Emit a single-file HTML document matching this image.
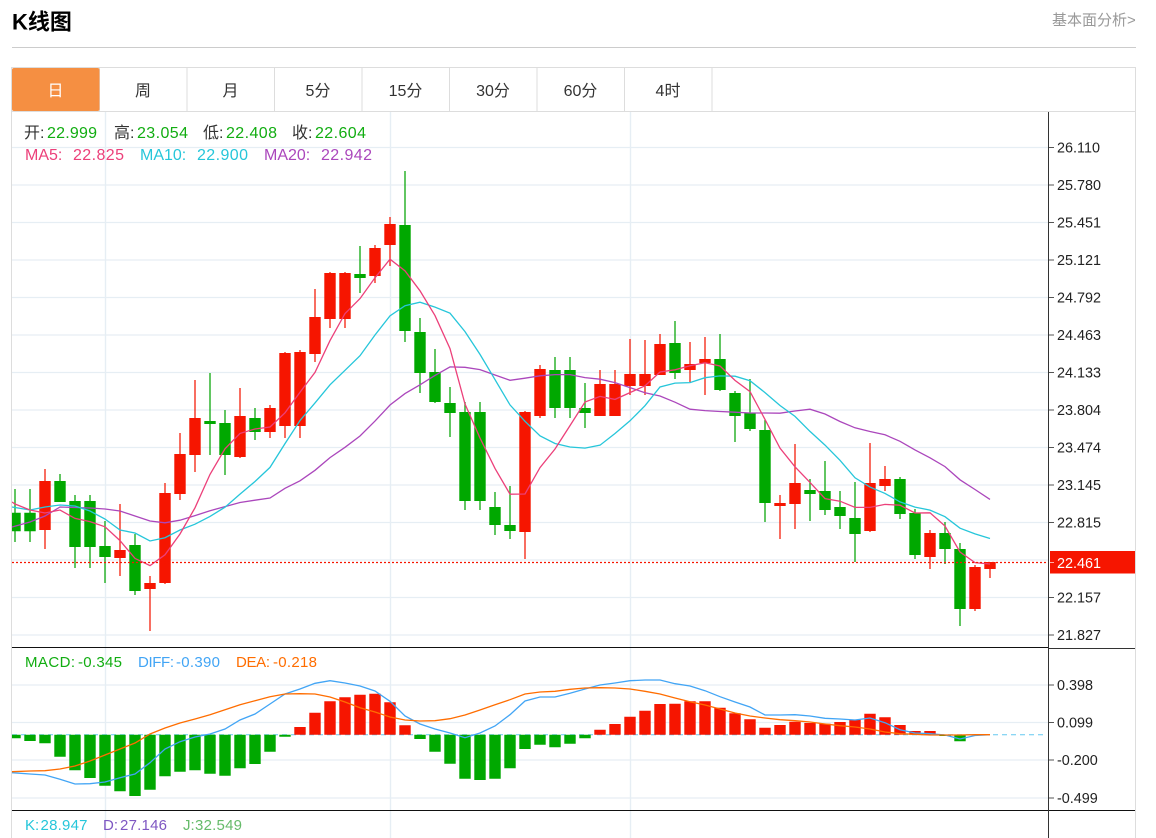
<!DOCTYPE html>
<html lang="zh"><head><meta charset="utf-8"><title>K线图</title>
<style>
html,body{margin:0;padding:0;background:#fff;width:1156px;height:838px;overflow:hidden}
svg{display:block;position:absolute;left:0;top:0}
text{font-family:"Liberation Sans","Noto Sans CJK SC",sans-serif}
</style></head><body>
<svg width="1156" height="838" viewBox="0 0 1156 838" xmlns="http://www.w3.org/2000/svg">
<defs><clipPath id="c"><rect x="12" y="112" width="1036" height="726"/></clipPath></defs>
<text x="12" y="29.5" font-size="22" font-weight="700" fill="#000">K线图</text>
<text x="1052" y="25" font-size="15" fill="#999">基本面分析&gt;</text>
<path d="M12 47.5H1136" stroke="#ccc" fill="none"/>
<!-- frame -->
<path d="M11.5 838V67.5H1135.5V838" stroke="#ddd" fill="none"/>
<path d="M12 111.5H1135.5M99.5 68V111M187 68V111M274.5 68V111M362 68V111M449.5 68V111M537 68V111M624.5 68V111M712 68V111" stroke="#ddd" fill="none"/>
<rect x="12" y="68" width="87.5" height="43" rx="2" fill="#f58f42"/>
<g font-size="16" text-anchor="middle" fill="#333">
<text x="55.5" y="96" fill="#fff">日</text><text x="143" y="96">周</text><text x="230.5" y="96">月</text><text x="318" y="96">5分</text><text x="405.5" y="96">15分</text><text x="493" y="96">30分</text><text x="580.5" y="96">60分</text><text x="668" y="96">4时</text>
</g>
<!-- grid -->
<path d="M105.5 112V838M390.5 112V838M630.5 112V838" stroke="#e6eef4" stroke-width="1.4" fill="none"/>
<path d="M12 147.5H1048M12 185H1048M12 222.5H1048M12 260H1048M12 297.5H1048M12 335H1048M12 372.5H1048M12 410H1048M12 447.5H1048M12 485H1048M12 522.5H1048M12 560H1048M12 597.5H1048M12 635H1048M12 685H1048M12 722.5H1048M12 760H1048M12 798H1048" stroke="#e6eef4" stroke-width="1.3" fill="none"/>
<g clip-path="url(#c)" fill="none">
<!-- green wicks -->
<path stroke="#1fae1f" stroke-width="1.4" d="M15 489V542M30 489V542M60 474V502M75 495V568M90 495V568M105 521V583M135 534V595M210 373V455M225 410V475M255 408V440M360 246V293M405 171V342M420 318V393M435 349V403M450 387V437M465 402V510M480 402V510M495 492V535M510 486V539M555 357V418M570 357V418M585 383V428M675 321V379M720 334V391M735 391V442M750 379V431M765 420V522M810 479V521M825 461V515M840 491V529M855 482V562M900 477V519M915 509V559M945 522V564M960 543V626"/>
<!-- red wicks -->
<path stroke="#f5301e" stroke-width="1.4" d="M45 469V549M120 504V576M150 576V631M165 483V584M180 433V500M195 380V472M240 388V458M270 405V438M285 352V438M300 350V438M315 289V362M330 272V328M345 272V328M375 245V283M390 217V266M525 411V559M540 365V418M600 370V416M615 370V416M630 339V395M645 340V395M660 334V375M690 342V382M705 337V395M780 495V539M795 444V529M870 443V532M885 466V491M930 530V569M975 565V611M990 562V578"/>
<!-- green bodies -->
<path stroke="#00a800" stroke-width="11.4" d="M15 512.7V531.3M30 512.7V531.3M60 481V502M75 501V547M90 501V547M105 546V557M135 545V591M210 421V424M225 423V455M255 418V432M360 274V278M405 225V331M420 332V373M435 372V402M450 403V413M465 412V501M480 412V501M495 507V525M510 525V531M555 370V408M570 370V408M585 408V413M675 343V373M720 359V390M735 393V416M750 413V429M765 430V503M810 490V494M825 491V510M840 507V516M855 518V534M900 479V514M915 513V555M945 533V549M960 549V609"/>
<!-- red bodies -->
<path stroke="#f61500" stroke-width="11.4" d="M45 481V530M120 550V558M150 583V589M165 493V583M180 454V494M195 418V455M240 416V457M270 408V432M285 353V426M300 352V426M315 317V354M330 273V319M345 273V319M375 248V276M390 224V245M525 412V532M540 369V416M600 384V416M615 384V416M630 374V386M645 374V386M660 344V375M690 364V370M705 359V363M780 503V506M795 483V504M870 483V531M885 479V486M930 533V557M975 567V609M990 562V569"/>
<!-- MA20 -->
<polyline stroke="#ab47bc" stroke-width="1.3" points="12,527 30,522 45,516 60,507 75,507.5 90,508 105,509 120,511 135,516 150,521 165,522.8 180,520.2 195,515.6 210,510.7 225,506.6 240,502.5 255,500.2 270,498 285,488.3 300,480.8 315,470.3 330,457.6 345,447.3 360,436 375,421.1 390,405 405,393.6 420,384.8 435,375.4 450,366.9 465,367.3 480,369.6 495,375 510,380.3 525,378.2 540,375.8 555,374.6 570,374.6 585,377.6 600,379.2 615,382.6 630,387.6 645,392.7 660,396 675,402.2 690,409.2 705,410.6 720,411.5 735,412.2 750,413 765,413 780,413.2 795,411 810,409.2 825,414 840,421.5 855,427.8 870,431.5 885,434.8 900,441.3 915,449.9 930,457.8 945,466.6 960,479.8 975,489.5 990,499.4"/>
<!-- MA10 -->
<polyline stroke="#26c6da" stroke-width="1.3" points="12,507 30,510 45,507 60,505 75,506 90,511 105,519 120,530 135,533 150,541 165,537.7 180,530 195,524.2 210,516.4 225,507.2 240,494.1 255,481.5 270,467.4 285,443.6 300,420.5 315,402.9 330,384.8 345,370.3 360,355.7 375,335 390,315.8 405,305.7 420,302.2 435,307.1 450,313.2 465,331.6 480,354.4 495,379.6 510,404.9 525,421.3 540,435.8 555,443.5 570,447 585,448.1 600,445.2 615,433.5 630,420.8 645,405.7 660,387 675,383.1 690,382.6 705,377.7 720,375.9 735,376.2 750,380.7 765,392.6 780,405.5 795,416.4 810,431.4 825,445.1 840,460.3 855,477.8 870,487.1 885,493.4 900,501.9 915,507.1 930,510.1 945,516.7 960,528.2 975,533.9 990,538.5"/>
<!-- MA5 -->
<polyline stroke="#ec407a" stroke-width="1.3" points="12,502 15,504 30,510 45,513 60,510 75,518.4 90,521.6 105,526.8 120,540.6 135,558.4 150,565.6 165,554.8 180,534 195,507.8 210,474.4 225,448.8 240,433.4 255,429 270,427 285,412.8 300,392.2 315,372.4 330,340.6 345,313.6 360,298.6 375,277.8 390,259.2 405,270.8 420,290.8 435,315.6 450,348.6 465,404 480,438 495,468.4 510,494.2 525,494 540,467.6 555,449 570,425.6 585,402 600,396.4 615,399.4 630,392.6 645,385.8 660,372 675,369.8 690,365.8 705,362.8 720,366 735,380.4 750,391.6 765,419.4 780,448.2 795,466.8 810,482.4 825,498.6 840,501.2 855,507.4 870,507.4 885,504.4 900,505.2 915,513 930,512.8 945,526 960,552 975,562.6 990,564"/>
<!-- last price line -->
<path d="M12 562.5H1048" stroke="#f61500" stroke-width="1.2" stroke-dasharray="2 2"/>
<!-- MACD baseline -->
<path d="M12 734.7H1044" stroke="#64c8f0" stroke-width="1" stroke-dasharray="5 4"/>
<!-- MACD bars -->
<path stroke="#00a800" stroke-width="11.4" d="M15 734.7V738.3M30 734.7V741M45 734.7V743.3M60 734.7V756.7M75 734.7V770.3M90 734.7V778M105 734.7V785.7M120 734.7V791.3M135 734.7V796M150 734.7V789.7M165 734.7V776.3M180 734.7V771.7M195 734.7V770.3M210 734.7V773.7M225 734.7V775.7M240 734.7V768.3M255 734.7V764M270 734.7V751.7M285 734.7V736.7M420 734.7V739M435 734.7V751.7M450 734.7V763.7M465 734.7V778.7M480 734.7V780M495 734.7V778.7M510 734.7V768.3M525 734.7V749M540 734.7V744.7M555 734.7V747.3M570 734.7V743.7M585 734.7V738.3M945 734.7V736M960 734.7V741.3"/>
<path stroke="#f61500" stroke-width="11.4" d="M300 734.7V727M315 734.7V712.7M330 734.7V701.3M345 734.7V697.3M360 734.7V694.7M375 734.7V693.7M390 734.7V702.3M405 734.7V725.3M600 734.7V729.7M615 734.7V724M630 734.7V716.7M645 734.7V710.7M660 734.7V704M675 734.7V703.7M690 734.7V701.3M705 734.7V701.3M720 734.7V707.7M735 734.7V713.3M750 734.7V719.3M765 734.7V727.7M780 734.7V725M795 734.7V721.7M810 734.7V723M825 734.7V723.7M840 734.7V722M855 734.7V719.7M870 734.7V713.7M885 734.7V717.3M900 734.7V725M915 734.7V731M930 734.7V731"/>
<!-- DIFF -->
<polyline stroke="#42a5f5" stroke-width="1.3" points="12,772.7 30,774 45,775 60,779.3 75,784 90,783.7 105,782 120,777.7 135,774 150,762.7 165,749 180,741.7 195,737 210,734 225,729 240,720 255,714 270,704 285,694 300,689 315,683.3 330,680.7 345,683 360,686 375,691 390,701.3 405,716 420,724 435,729 450,733 465,737.7 480,733 495,726 510,714.7 525,701 540,697 555,697 570,693.3 585,689 600,685 615,683 630,680.7 645,680 660,680 675,683.7 690,686 705,690.7 720,696.7 735,702 750,707 765,715 780,715 795,714.7 810,716 825,718.3 840,719 855,720 870,718 885,722.7 900,729.7 915,733 930,733.7 945,735 960,739 975,735.5 990,734.7"/>
<!-- DEA -->
<polyline stroke="#ff6d00" stroke-width="1.3" points="12,771.7 30,771 45,770.7 60,769 75,766 90,761 105,755 120,749 135,743 150,734 165,728 180,723 195,719 210,714.7 225,709.7 240,704.7 255,700.7 270,696.7 285,694 300,693.7 315,694 330,697 345,702 360,707.7 375,712 390,717 405,720 420,721 435,720.7 450,718.7 465,715 480,710 495,704.7 510,699.7 525,694 540,692 555,691.3 570,689.3 585,688 600,687.7 615,688 630,689 645,691.3 660,694 675,698 690,701.7 705,705 720,709 735,713 750,716 765,718 780,719.7 795,720.7 810,722 825,724 840,725.7 855,727 870,729 885,732 900,733.7 915,734.3 930,735 945,735 960,735 975,734.7 990,734.7"/>
</g>
<!-- axis and separators -->
<path d="M12 647.5H1048M12 810.5H1135" stroke="#111" stroke-width="1" fill="none"/>
<path d="M1049 648.5H1135" stroke="#333" fill="none"/>
<path d="M1048.5 112V838" stroke="#333" fill="none"/>
<path d="M1049 147.5H1054M1049 185H1054M1049 222.5H1054M1049 260H1054M1049 297.5H1054M1049 335H1054M1049 372.5H1054M1049 410H1054M1049 447.5H1054M1049 485H1054M1049 522.5H1054M1049 597.5H1054M1049 635H1054M1049 685H1054M1049 722.5H1054M1049 760H1054M1049 798H1054" stroke="#555" fill="none"/>
<rect x="1050" y="551" width="85" height="22.5" fill="#f61500"/>
<path d="M1050 562.5H1054" stroke="#ffb0a8" fill="none"/>
<!-- price labels -->
<g font-size="14.4" fill="#222">
<text x="1057" y="152.5">26.110</text><text x="1057" y="190">25.780</text><text x="1057" y="227.5">25.451</text><text x="1057" y="265">25.121</text><text x="1057" y="302.5">24.792</text><text x="1057" y="340">24.463</text><text x="1057" y="377.5">24.133</text><text x="1057" y="415">23.804</text><text x="1057" y="452.5">23.474</text><text x="1057" y="490">23.145</text><text x="1057" y="527.5">22.815</text><text x="1057" y="602.5">22.157</text><text x="1057" y="640">21.827</text>
<text x="1057" y="568" fill="#fff">22.461</text>
<text x="1057" y="690">0.398</text><text x="1057" y="727.5">0.099</text><text x="1057" y="765">-0.200</text><text x="1057" y="803">-0.499</text>
</g>
<!-- legends -->
<g font-size="16">
<text x="24" y="138" fill="#333">开:</text><text x="47" y="138" fill="#11ad11" textLength="50">22.999</text>
<text x="114" y="138" fill="#333">高:</text><text x="137" y="138" fill="#11ad11" textLength="51">23.054</text>
<text x="203" y="138" fill="#333">低:</text><text x="226" y="138" fill="#11ad11" textLength="51">22.408</text>
<text x="292" y="138" fill="#333">收:</text><text x="315" y="138" fill="#11ad11" textLength="51">22.604</text>
<text x="25" y="160" fill="#ec407a">MA5:</text><text x="73" y="160" fill="#ec407a" textLength="51">22.825</text>
<text x="140" y="160" fill="#26c6da">MA10:</text><text x="197" y="160" fill="#26c6da" textLength="51">22.900</text>
<text x="264" y="160" fill="#ab47bc">MA20:</text><text x="321" y="160" fill="#ab47bc" textLength="51">22.942</text>
</g>
<g font-size="15">
<text x="25" y="667" fill="#11ad11" textLength="50">MACD:</text><text x="78" y="667" fill="#11ad11" textLength="44">-0.345</text>
<text x="138" y="667" fill="#42a5f5" textLength="36">DIFF:</text><text x="176" y="667" fill="#42a5f5" textLength="44">-0.390</text>
<text x="236" y="667" fill="#ff6d00" textLength="34">DEA:</text><text x="273" y="667" fill="#ff6d00" textLength="44">-0.218</text>
<text x="25" y="830" fill="#26c6da">K:</text><text x="40.5" y="830" fill="#26c6da" textLength="47">28.947</text>
<text x="103" y="830" fill="#7e57c2">D:</text><text x="120" y="830" fill="#7e57c2" textLength="47">27.146</text>
<text x="183" y="830" fill="#66bb6a">J:</text><text x="195" y="830" fill="#66bb6a" textLength="47">32.549</text>
</g>
</svg>
</body></html>
